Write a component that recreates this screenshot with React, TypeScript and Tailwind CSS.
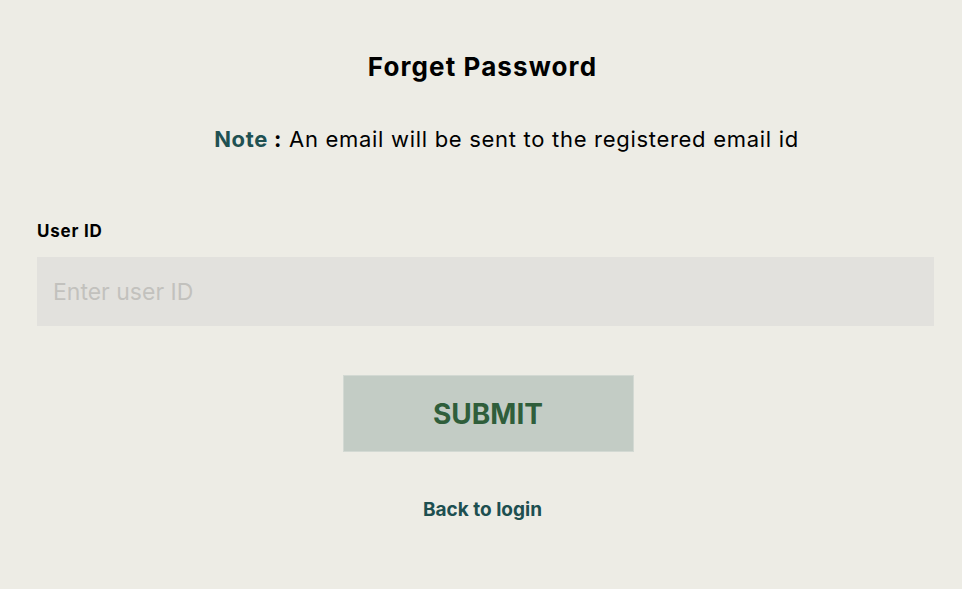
export default function App() {
  return (
    <div
      className="min-h-screen w-full bg-[#edece5] pt-[51px] text-black"
      style={{ fontFamily: "Inter, 'Noto Sans', sans-serif" }}
    >
      <h1 className="pl-[3px] text-center text-[26px] font-bold leading-[32px] tracking-[1.1px]">Forget Password</h1>
      <p className="mt-[42px] pl-[51px] text-center text-[22px] leading-[28px] tracking-[0.7px]">
        <span className="font-bold text-[#1f5152]">Note</span>
        <span className="font-bold"> :</span> An email will be sent to the registered email id
      </p>
      <div className="mt-[68px] pl-[37px] pr-[28px]">
        <label className="block text-[17px] font-bold leading-[20px] tracking-[0.8px]">User ID</label>
        <input
          className="mt-[16px] block h-[69px] w-full bg-[#e2e1dd] px-[16px] text-[23px] outline-none placeholder:text-[#c2c1bd]"
          placeholder="Enter user ID"
        />
      </div>
      <div className="mt-[49px] flex justify-center pl-[14px]">
        <button className="h-[77px] w-[291px] border border-[#d3d9d3] bg-[#c3ccc5] text-[28px] font-bold text-[#2f5e3b]">
          SUBMIT
        </button>
      </div>
      <div className="mt-[46px] flex justify-center pl-[3px]">
        <a className="text-[19px] font-bold leading-[24px] text-[#1d4f50]">Back to login</a>
      </div>
    </div>
  );
}
